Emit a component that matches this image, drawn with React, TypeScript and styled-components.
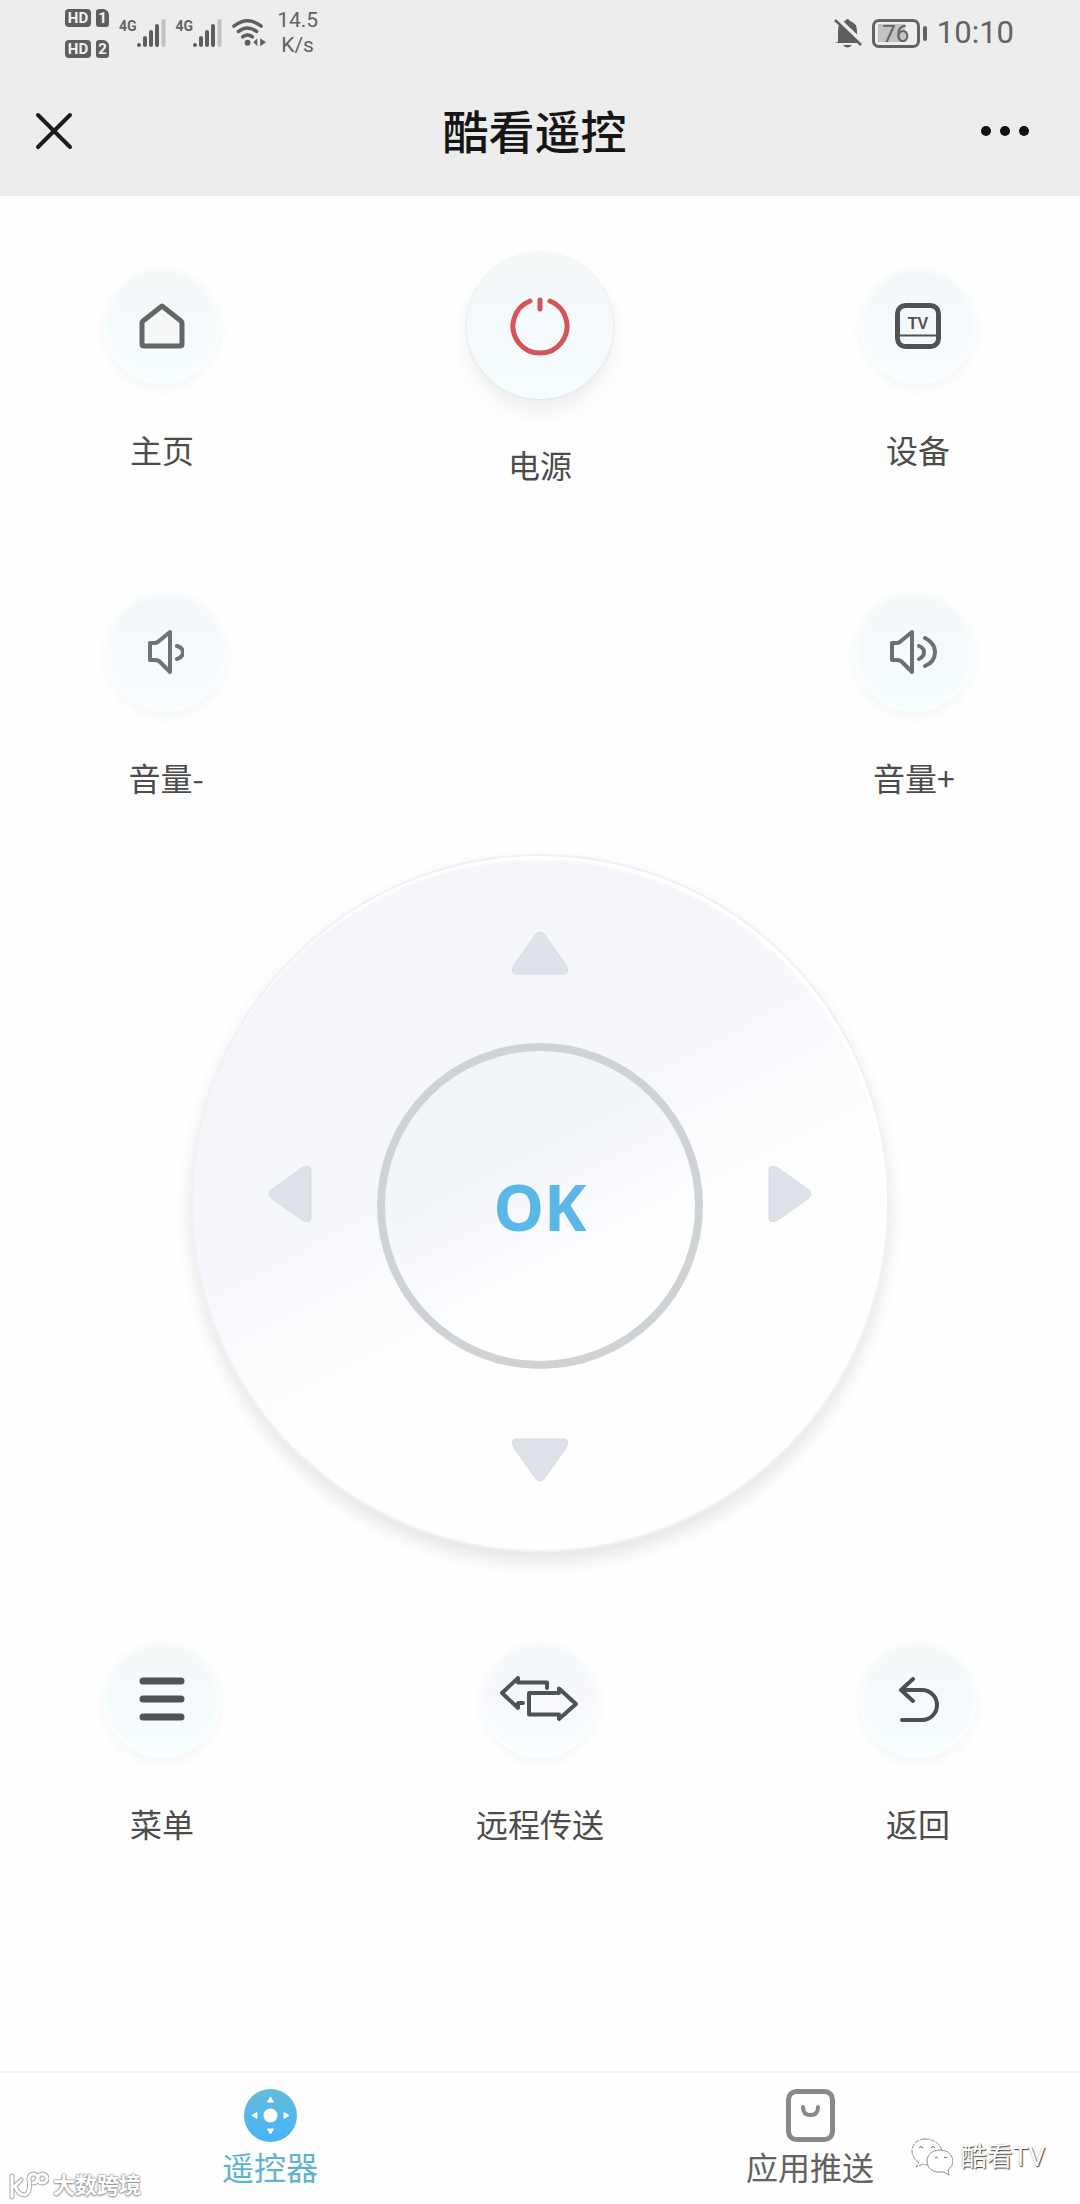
import React, { ReactNode } from 'react';
import styled, { createGlobalStyle } from 'styled-components';

const sans = `Roboto, "Noto Sans CJK SC", sans-serif`;

const GlobalStyle = createGlobalStyle`
  *, *::before, *::after { box-sizing: border-box; }
  body {
    margin: 0;
    background: #fefefe;
    color: #4c4c4c;
    font-family: ${sans};
  }
  button {
    margin: 0;
    padding: 0;
    border: 0;
    background: none;
    color: inherit;
    font: inherit;
    cursor: pointer;
  }
  svg { display: block; }
`;

const Page = styled.div`
  position: relative;
  display: flex;
  flex-direction: column;
  min-height: 100vh;
`;

const Header = styled.header`
  background: #ededed;
`;

/* ---------- status bar ---------- */

const StatusBar = styled.div`
  display: flex;
  justify-content: space-between;
  height: 66px;
  padding: 0 66px 0 65px;
  color: #626262;
`;

const StatusGroup = styled.div`
  display: flex;
  align-items: center;
  gap: 10px;
`;

const SimList = styled.div`
  display: flex;
  flex-direction: column;
  gap: 13px;
`;

const SimRow = styled.div`
  display: flex;
  gap: 5px;
`;

const Badge = styled.span<{ $cut?: boolean }>`
  min-width: ${(p) => (p.$cut ? 13 : 26)}px;
  height: 18px;
  border-radius: ${(p) => (p.$cut ? '3px 6px 3px 3px' : '4px')};
  background: #5e5e5e;
  color: #f3f3f3;
  font-size: 15px;
  font-weight: 700;
  line-height: 18px;
  text-align: center;
`;

const SignalBox = styled.div`
  display: flex;
  align-items: flex-start;
  height: 28px;
  font-size: 14px;
  font-weight: 700;
  line-height: 14px;
`;

const Speed = styled.div`
  font-size: 21px;
  line-height: 25px;
  text-align: center;
`;

const Battery = styled.div`
  display: flex;
  align-items: center;
  gap: 3px;
  &::after {
    content: '';
    width: 4px;
    height: 15px;
    border-radius: 2px;
    background: #626262;
  }
`;

const BatteryLevel = styled.span`
  width: 48px;
  height: 29px;
  border: 3px solid #626262;
  border-radius: 7px;
  background: linear-gradient(90deg, #c2c2c2 76%, #ededed 76%) center / 36px 18px no-repeat;
  font-size: 24px;
  line-height: 24px;
  text-align: center;
`;

const Clock = styled.time`
  font-size: 31px;
  line-height: 38px;
`;

/* ---------- title bar ---------- */

const TitleBar = styled.div`
  display: grid;
  grid-template-columns: 1fr auto 1fr;
  align-items: center;
  height: 130px;
  padding: 0 50px 0 35px;
  color: #161616;
  & > :last-child { justify-self: end; }
`;

const TitleWrap = styled.h1`
  margin: 0;
  padding: 4px 0 0 4px;
  font-size: 46px;
  font-weight: 500;
  line-height: 66px;
`;

/* ---------- remote keys ---------- */

const Main = styled.main`
  flex: 1;
  display: flex;
  flex-direction: column;
  padding: 57px 0;
`;

const KeyRow = styled.div<{ $inset: number; $top?: number }>`
  display: flex;
  justify-content: space-between;
  align-items: center;
  margin-top: ${(p) => p.$top ?? 0}px;
  padding: 0 ${(p) => p.$inset}px;
`;

const KeyButton = styled.button`
  display: flex;
  flex-direction: column;
  align-items: center;
  gap: 42px;
  min-width: 128px;
  font-family: "Noto Sans CJK SC", sans-serif;
  font-size: 32px;
  line-height: 46px;
  white-space: nowrap;
`;

type Tone = 'mint' | 'blue' | 'lilac';
const tones: Record<Tone, string> = {
  mint: 'linear-gradient(#f3f8f9, #f6fdfe)',
  blue: 'linear-gradient(#f2f8f9, #f8fcff)',
  lilac: 'linear-gradient(#f5f8fb, #f6f8fd 50%, #f9fdff)',
};

const KeyDisc = styled.span<{ $size: number; $tone: Tone; $raised?: boolean }>`
  display: grid;
  place-items: center;
  width: ${(p) => p.$size}px;
  height: ${(p) => p.$size}px;
  border-radius: 50%;
  background: ${(p) => tones[p.$tone]};
  box-shadow: ${(p) =>
    p.$raised
      ? '0 0 3px rgba(90, 100, 110, 0.18), 0 12px 20px rgba(60, 60, 70, 0.08)'
      : 'inset 0 0 8px #fdfefe, 0 5px 12px rgba(90, 100, 110, 0.06)'};
`;

interface KeyProps {
  label: string;
  size?: number;
  tone?: Tone;
  raised?: boolean;
  children: ReactNode;
}

const Key = ({ label, size = 116, tone = 'mint', raised, children }: KeyProps) => (
  <KeyButton type="button">
    <KeyDisc $size={size} $tone={tone} $raised={raised}>
      {children}
    </KeyDisc>
    <span>{label}</span>
  </KeyButton>
);

/* ---------- direction pad ---------- */

const Dial = styled.div`
  display: grid;
  grid-template-columns: 1fr 326px 1fr;
  grid-template-rows: 1fr 326px 1fr;
  grid-template-areas: '. up .' 'left ok right' '. down .';
  place-items: center;
  align-self: center;
  width: 698px;
  height: 698px;
  margin-top: 54px;
  padding: 6px 10px 0;
  border: 2px solid #f3f0f1;
  border-radius: 50%;
  background: linear-gradient(153deg, #f6f5fb 0%, #f5f7fb 34%, #f7f8fd 43%, #fcfcfe 53%, #fefefe 75%);
  box-shadow: inset -2px 4px 3px #ffffff, 0 10px 16px rgba(100, 80, 85, 0.14);
`;

const turns = { up: 0, right: 90, down: 180, left: 270 };
type Direction = keyof typeof turns;

const ArrowButton = styled.button<{ $dir: Direction }>`
  grid-area: ${(p) => p.$dir};
  padding: ${(p) => (p.$dir === 'left' || p.$dir === 'right' ? '0 0 24px' : '0')};
  svg { transform: rotate(${(p) => turns[p.$dir]}deg); }
`;

const OkButton = styled.button`
  grid-area: ok;
  width: 326px;
  height: 326px;
  border: 8px solid #d0d3d5;
  border-radius: 50%;
  background: linear-gradient(153deg, #f0f6f8 10%, #f3f6fa 39%, #f8f9fe 52%, #fcfdfe 64%, #fefefe 80%);
  color: #5bb7e8;
  font-family: "Noto Sans", sans-serif;
  font-size: 64px;
  font-weight: 700;
`;

const names: Record<Direction, string> = { up: '上', right: '右', down: '下', left: '左' };

const Arrow = ({ dir }: { dir: Direction }) => (
  <ArrowButton type="button" $dir={dir} aria-label={names[dir]}>
    <svg width="58" height="58" viewBox="0 0 58 58">
      <path
        d="M25 10 L3 41 Q-1 50 5 50 H53 Q59 50 55 41 L33 10 Q29 6 25 10Z"
        fill="#dee2e9"
        stroke="#d7dbdf"
      />
    </svg>
  </ArrowButton>
);

/* ---------- bottom tabs ---------- */

const TabBar = styled.nav`
  display: flex;
  height: 133px;
  border-top: 2px solid #f4f4f4;
`;

const Tab = styled.button<{ $active?: boolean }>`
  flex: 1;
  display: flex;
  flex-direction: column;
  align-items: center;
  gap: 4px;
  padding-top: 16px;
  color: ${(p) => (p.$active ? '#5db4cf' : '#626262')};
  font-size: 32px;
  line-height: 46px;
`;

/* ---------- watermarks lying over the page ---------- */

const Mark = styled.div<{ $side: 'left' | 'right' }>`
  position: absolute;
  display: flex;
  align-items: center;
  gap: ${(p) => (p.$side === 'left' ? 4 : 8)}px;
  color: #fff;
  pointer-events: none;
  ${(p) =>
    p.$side === 'left'
      ? `left: 9px; bottom: 2px; font-size: 22px; font-weight: 700; line-height: 32px;
         text-shadow: 0 0 2px #8a8a8a, 0 0 2px #8a8a8a, 0 1px 2px #a0a0a0;`
      : `right: 35px; bottom: 27px; font-size: 26px; line-height: 40px;
         text-shadow: 1px 1px 1px #444, 0 0 1px #999;`}
`;

/* ---------- drawings ---------- */

const Signal = () => (
  <SignalBox>
    4G
    <svg width="29" height="28" viewBox="1 0 29 28" stroke="#5e5e5e" strokeWidth="4" strokeLinecap="round">
      <path d="M3 26v0M9 19v7M15 13v13M21 7v19" />
      <path d="M27.500 2v24" stroke="#c0c0c0" />
    </svg>
  </SignalBox>
);

const Wifi = () => (
  <svg width="35" height="30" viewBox="0 0 36 30" fill="none" stroke="#5e5e5e" strokeWidth="3.500" strokeLinecap="round">
    <path d="M2 8Q16 -3 30 8M6.500 13.500Q16 6 25.500 13.500M11 19Q16 15 21 19" />
    <circle cx="16" cy="25" r="3" fill="#5e5e5e" stroke="none" />
    <path d="M22 24.500l4-4v8zM35 24.500l-6-4v8z" fill="#5e5e5e" stroke="none" />
  </svg>
);

const MutedBell = () => (
  <svg width="28" height="30" viewBox="0 0 28 30">
    <path d="M4 24V13Q4 4 11 3Q13.500 -1 16 3Q23 5 23 13V19L26 24V25H1Z" fill="#5e5e5e" />
    <path d="M9 27h9q-4.500 5-9 0z" fill="#5e5e5e" />
    <path d="M3 0L29 25" stroke="#ededed" strokeWidth="4" />
    <path d="M1 2L27 27" stroke="#5e5e5e" strokeWidth="2.500" />
  </svg>
);

const speaker = 'M2 14H7Q9 14 11 12L22 3V43L11 32Q9 31 7 31H2Z';

const RemoteIcon = () => (
  <svg width="53" height="53" viewBox="0 0 53 53">
    <defs>
      <linearGradient id="remote-fill" x1="0" y1="0" x2="0" y2="1">
        <stop offset="0" stopColor="#62bdd8" />
        <stop offset="1" stopColor="#48b3fb" />
      </linearGradient>
    </defs>
    <circle cx="26.500" cy="26.500" r="26.500" fill="url(#remote-fill)" />
    <circle cx="26.500" cy="26.500" r="7" fill="#fff" />
    <path
      d="M26.500 8l3 5h-6zM26.500 45l3-5h-6zM8 26.500l5-3v6zM45 26.500l-5-3v6z"
      fill="#fff"
      stroke="#fff"
      strokeLinejoin="round"
    />
  </svg>
);

export default function App() {
  return (
    <Page>
      <GlobalStyle />
      <Header>
        <StatusBar>
          <StatusGroup>
            <SimList>
              <SimRow><Badge>HD</Badge><Badge $cut>1</Badge></SimRow>
              <SimRow><Badge>HD</Badge><Badge $cut>2</Badge></SimRow>
            </SimList>
            <Signal />
            <Signal />
            <Wifi />
            <Speed>14.5<br />K/s</Speed>
          </StatusGroup>
          <StatusGroup>
            <MutedBell />
            <Battery><BatteryLevel>76</BatteryLevel></Battery>
            <Clock>10:10</Clock>
          </StatusGroup>
        </StatusBar>
        <TitleBar>
          <button type="button" aria-label="关闭">
            <svg width="38" height="38" viewBox="0 0 38 38" stroke="#1c1c1c" strokeWidth="4" strokeLinecap="round">
              <path d="M3 3L35 35M35 3L3 35" />
            </svg>
          </button>
          <TitleWrap>酷看遥控</TitleWrap>
          <button type="button" aria-label="更多">
            <svg width="50" height="12" viewBox="0 0 50 12" fill="#111">
              <circle cx="6" cy="6" r="5" />
              <circle cx="25" cy="6" r="5" />
              <circle cx="44" cy="6" r="5" />
            </svg>
          </button>
        </TitleBar>
      </Header>

      <Main>
        <KeyRow $inset={98}>
          <Key label="主页">
            <svg width="46" height="46" viewBox="0 0 46 46" fill="#f5f7f9" stroke="#626665" strokeWidth="5" strokeLinejoin="round">
              <path d="M23 3L4 18Q3 19 3 20V41Q3 43 5 43H41Q43 43 43 41V20Q43 19 42 18Z" />
            </svg>
          </Key>
          <Key label="电源" size={146} raised>
            <svg width="60" height="60" viewBox="0 0 60 60" fill="none" stroke="#d4545a" strokeWidth="5" strokeLinecap="round">
              <path d="M20 5A27 27 0 1 0 40 5M30 4V13" />
            </svg>
          </Key>
          <Key label="设备" tone="blue">
            <svg width="46" height="46" viewBox="0 0 46 46">
              <rect x="2.500" y="2.500" width="41" height="41" rx="8" fill="#f5f8fa" stroke="#505356" strokeWidth="5" />
              <path d="M3 32.500H43" stroke="#505356" strokeWidth="2" />
              <text x="23" y="26" fill="#505356" fontFamily="Liberation Sans, sans-serif" fontSize="16" fontWeight="700" textAnchor="middle">TV</text>
            </svg>
          </Key>
        </KeyRow>

        <KeyRow $inset={102} $top={105}>
          <Key label="音量-" size={120} tone="blue">
            <svg width="36" height="46" viewBox="0 0 36 46" fill="none" stroke="#6d7377" strokeWidth="4" strokeLinejoin="round" strokeLinecap="round">
              <path d={speaker} fill="#f8fafc" />
              <path d="M29 17Q35 19 35 23Q35 28 29 30" />
            </svg>
          </Key>
          <Key label="音量+" size={120}>
            <svg width="48" height="46" viewBox="0 0 48 46" fill="none" stroke="#6a7172" strokeWidth="4" strokeLinejoin="round" strokeLinecap="round">
              <path d={speaker} fill="#f8fafb" />
              <path d="M29 17Q34 19 34 23Q34 28 29 30M35 9Q45 14 45 23Q45 33 35 37" />
            </svg>
          </Key>
        </KeyRow>

        <Dial>
          <Arrow dir="up" />
          <Arrow dir="left" />
          <OkButton type="button">OK</OkButton>
          <Arrow dir="right" />
          <Arrow dir="down" />
        </Dial>

        <KeyRow $inset={98} $top={90}>
          <Key label="菜单">
            <svg width="46" height="46" viewBox="0 0 46 46" stroke="#4f5556" strokeWidth="7" strokeLinecap="round">
              <path d="M4 4H42M4 22H42M4 40H42" />
            </svg>
          </Key>
          <Key label="远程传送" tone="lilac">
            <svg width="80" height="48" viewBox="2 0 80 48" fill="none" stroke="#4f5256" strokeWidth="4" strokeLinejoin="round" strokeLinecap="round">
              <path d="M49 12V6.500H20V2L4 17L20 32V27H25" />
              <path d="M31 17H61V12.500L78 28L61 43V38.500H31Z" fill="#f7f9fd" />
            </svg>
          </Key>
          <Key label="返回">
            <svg width="46" height="46" viewBox="0 0 46 46" fill="none" stroke="#4a5052" strokeWidth="4" strokeLinejoin="round" strokeLinecap="round">
              <path d="M18 2L6 13L18 24M6 13H27A15 15 0 0 1 27 43H7" />
            </svg>
          </Key>
        </KeyRow>
      </Main>

      <TabBar>
        <Tab type="button" $active>
          <RemoteIcon />
          遥控器
        </Tab>
        <Tab type="button">
          <svg width="49" height="53" viewBox="0 0 49 53" fill="none" stroke="#898989" strokeWidth="5">
            <rect x="2.500" y="2.500" width="44" height="48" rx="8" />
            <path d="M17 18Q17 26 24.500 26Q32 26 32 18" strokeWidth="4" strokeLinecap="round" />
          </svg>
          应用推送
        </Tab>
      </TabBar>

      <Mark $side="left">
        <svg width="40" height="30" viewBox="0 0 40 30" fill="none" strokeLinecap="round" strokeLinejoin="round">
          {['#a8a8a8', '#ffffff'].map((color, i) => (
            <path
              key={color}
              d="M3 5V26M12 9L6 15Q9 24 16 24Q22 22 20 8A4.500 4.500 0 1 1 24 12Q27 12 29 8A4.500 4.500 0 1 1 33 12Q30 12 28 8"
              stroke={color}
              strokeWidth={i ? 3 : 5}
            />
          ))}
        </svg>
        大数跨境
      </Mark>
      <Mark $side="right">
        <svg width="42" height="38" viewBox="0 0 42 38" fill="#fff" stroke="#8f8f8f" strokeLinejoin="round">
          <path d="M14 1C6 1 1 7 1 13C1 18 4 22 8 25L5 29L12 26Q16 28 20 26L31 12Q26 1 14 1Z" strokeDasharray="5 1" />
          <path d="M29 12C21 12 16 17 16 23C16 30 22 35 30 34L33 34L38 37L37 32Q42 28 42 23C41 16 36 12 29 12Z" />
          <path d="M8 10q2-3 4 0M20 10q2-3 4 0M24 20q1-2 3 0M33 20q1-2 3 0" fill="none" stroke="#666" />
        </svg>
        酷看TV
      </Mark>
    </Page>
  );
}
